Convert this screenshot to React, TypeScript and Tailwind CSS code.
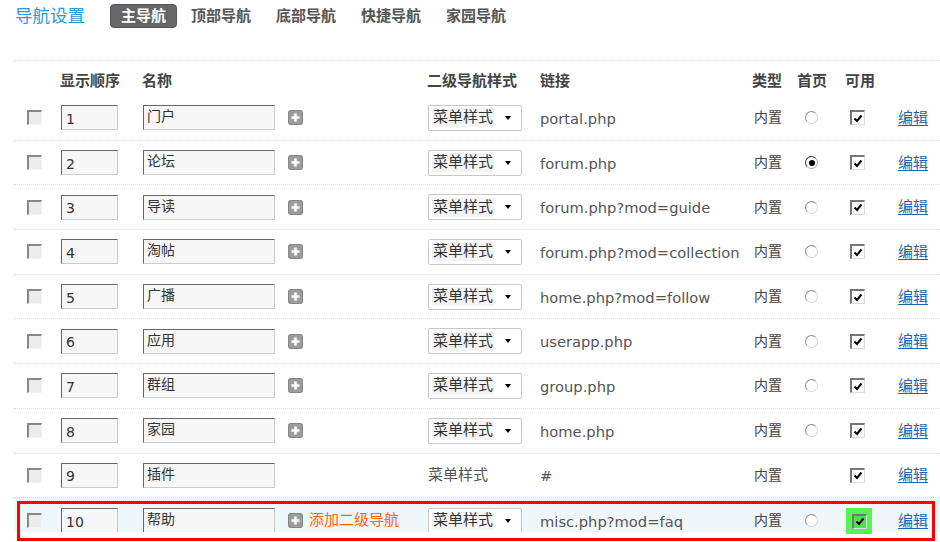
import React from "react";

interface NavRow {
  order: string;
  name: string;
  link: string;
  home?: boolean;
  plain?: boolean;
  add?: boolean;
}

const rows: NavRow[] = [
  { order: "1", name: "门户", link: "portal.php" },
  { order: "2", name: "论坛", link: "forum.php", home: true },
  { order: "3", name: "导读", link: "forum.php?mod=guide" },
  { order: "4", name: "淘帖", link: "forum.php?mod=collection" },
  { order: "5", name: "广播", link: "home.php?mod=follow" },
  { order: "6", name: "应用", link: "userapp.php" },
  { order: "7", name: "群组", link: "group.php" },
  { order: "8", name: "家园", link: "home.php" },
  { order: "9", name: "插件", link: "#", plain: true },
  { order: "10", name: "帮助", link: "misc.php?mod=faq", add: true },
];

const tabs = ["主导航", "顶部导航", "底部导航", "快捷导航", "家园导航"];

const font = "font-['DejaVu_Sans','Noto_Sans_CJK_SC',sans-serif]";

const SelectBox = () => (
  <div className="flex h-[26px] w-[94px] items-center rounded-[2px] border border-[#c9c9c9] bg-white pl-[3px]">
    <span className="bg-[#f4f4f4] px-[1px] text-[15px] leading-[19px] text-[#333]">菜单样式</span>
    <span className="ml-[11px] h-0 w-0 border-l-[3.5px] border-r-[3.5px] border-t-[4px] border-l-transparent border-r-transparent border-t-black" />
  </div>
);

const PlusIcon = () => (
  <svg width="15" height="15" viewBox="0 0 15 15" className="shrink-0">
    <rect x="0" y="0" width="15" height="15" rx="3" fill="#9c9c9c" />
    <rect x="0.5" y="0.5" width="14" height="14" rx="2.5" fill="none" stroke="#878787" />
    <path d="M3.5 7.5H11.5M7.5 3.5V11.5" stroke="#fff" strokeWidth="2.6" />
  </svg>
);

const Radio = ({ checked }: { checked?: boolean }) => (
  <span
    className={
      checked
        ? "flex h-[13px] w-[13px] items-center justify-center rounded-full border-[1.5px] border-t-[#333] border-l-[#333] border-r-[#aaa] border-b-[#aaa] bg-white"
        : "block h-[13px] w-[13px] rounded-full border-[1.5px] border-t-[#8a8a8a] border-l-[#8a8a8a] border-r-[#d6d6d6] border-b-[#d6d6d6] bg-white"
    }
  >
    {checked && <span className="h-[6px] w-[6px] rounded-full bg-black" />}
  </span>
);

const Check = ({ bg = "bg-white" }: { bg?: string }) => (
  <span
    className={`flex h-[15px] w-[15px] items-center justify-center border-l-2 border-t-2 border-r border-b border-l-[#777] border-t-[#777] border-r-[#ddd] border-b-[#ddd] ${bg}`}
  >
    <svg width="10" height="9" viewBox="0 0 10 9">
      <path d="M1.5 4.5L4 7L8.5 1.5" fill="none" stroke="#000" strokeWidth="2" />
    </svg>
  </span>
);

const RowCheck = () => (
  <span className="block h-[15px] w-[15px] border-l-2 border-t-2 border-r border-b border-l-[#888] border-t-[#888] border-r-[#f4f4f4] border-b-[#f4f4f4] bg-[#ececec]" />
);

const Row = ({ row, last }: { row: NavRow; last?: boolean }) => (
  <div
    className={
      last
        ? "flex h-[44.7px] items-center"
        : "flex h-[44.7px] items-center border-b border-dotted border-[#c9e0ee]"
    }
  >
    <div className="w-[46px] pl-[13px]">
      <RowCheck />
    </div>
    <div className="w-[82px] pl-[1px]">
      <input
        readOnly
        value={row.order}
        className="block h-[25px] w-[57px] border border-t-[#666] border-l-[#666] border-r-[#ccc] border-b-[#ccc] bg-[#f7f7f7] px-[4px] pt-[2px] text-[14px] text-[#333] outline-none"
      />
    </div>
    <div className="flex w-[285px] items-center pl-[1px]">
      <input
        readOnly
        value={row.name}
        className="block h-[25px] w-[132px] border border-t-[#666] border-l-[#666] border-r-[#ccc] border-b-[#ccc] bg-[#f7f7f7] px-[3px] pb-[5px] text-[14px] text-[#333] outline-none"
      />
      {!row.plain && (
        <span className="ml-[13px] flex items-center">
          <PlusIcon />
          {row.add && <span className="ml-[6px] text-[15px] text-[#ff6600]">添加二级导航</span>}
        </span>
      )}
    </div>
    <div className="w-[113px] pl-[1px]">
      {row.plain ? <span className="text-[15px] text-[#555]">菜单样式</span> : <SelectBox />}
    </div>
    <div className="w-[212px] whitespace-nowrap pt-[2px] text-[14.7px] text-[#555]">{row.link}</div>
    <div className="w-[45px] pl-[2px] text-[14px] text-[#444]">内置</div>
    <div className="w-[48px] pl-[8px]">{!row.plain && <Radio checked={row.home} />}</div>
    <div className="w-[53px] pl-[5px]">
      <Check />
    </div>
    <div className="flex-1">
      <a className="text-[15px] text-[#2463a8] underline underline-offset-2">编辑</a>
    </div>
  </div>
);

const headers: [string, string][] = [
  ["w-[46px]", ""],
  ["w-[82px]", "显示顺序"],
  ["w-[285px]", "名称"],
  ["w-[113px]", "二级导航样式"],
  ["w-[212px]", "链接"],
  ["w-[45px]", "类型"],
  ["w-[48px]", "首页"],
  ["w-[53px]", "可用"],
];

export default function App() {
  const body = rows.slice(0, 9);
  const lastRow = rows[9];

  return (
    <div className={`relative h-[542px] w-[940px] overflow-hidden bg-white ${font}`}>
      <div className="flex h-[28px] items-center pl-[15px] pt-[4px]">
        <span className="mr-[25px] text-[17.5px] leading-[24px] text-[#2a9ad4]">导航设置</span>
        <div className="flex gap-[3px]">
          {tabs.map((tab, i) => (
            <span
              key={tab}
              className={
                i === 0
                  ? "rounded-[4px] border border-[#555] bg-[#666] px-[10px] text-[15px] font-bold leading-[22px] text-white"
                  : "px-[11px] text-[15px] font-bold leading-[24px] text-[#555]"
              }
            >
              {tab}
            </span>
          ))}
        </div>
      </div>

      <div className="ml-[14px] mt-[32px] border-t border-dotted border-[#c9e0ee]">
        <div className="flex h-[35px] items-start pt-[10px]">
          {headers.map(([w, label]) => (
            <div key={w} className={`${w} text-[15px] font-bold leading-[20px] text-[#444]`}>
              {label}
            </div>
          ))}
        </div>
        {body.map((row) => (
          <Row key={row.order} row={row} />
        ))}
        <div className="h-[33.5px] overflow-hidden bg-[#f0f7fb]">
          <Row row={lastRow} last />
        </div>
      </div>

      <div className="absolute left-[846px] top-[508px] flex h-[26px] w-[26px] items-center justify-center bg-[#55f555]">
        <Check bg="bg-[#4fe04f]" />
      </div>
      <div className="pointer-events-none absolute left-[17px] top-[501px] h-[40px] w-[918px] border-[3px] border-[#ff0000]" />
    </div>
  );
}
